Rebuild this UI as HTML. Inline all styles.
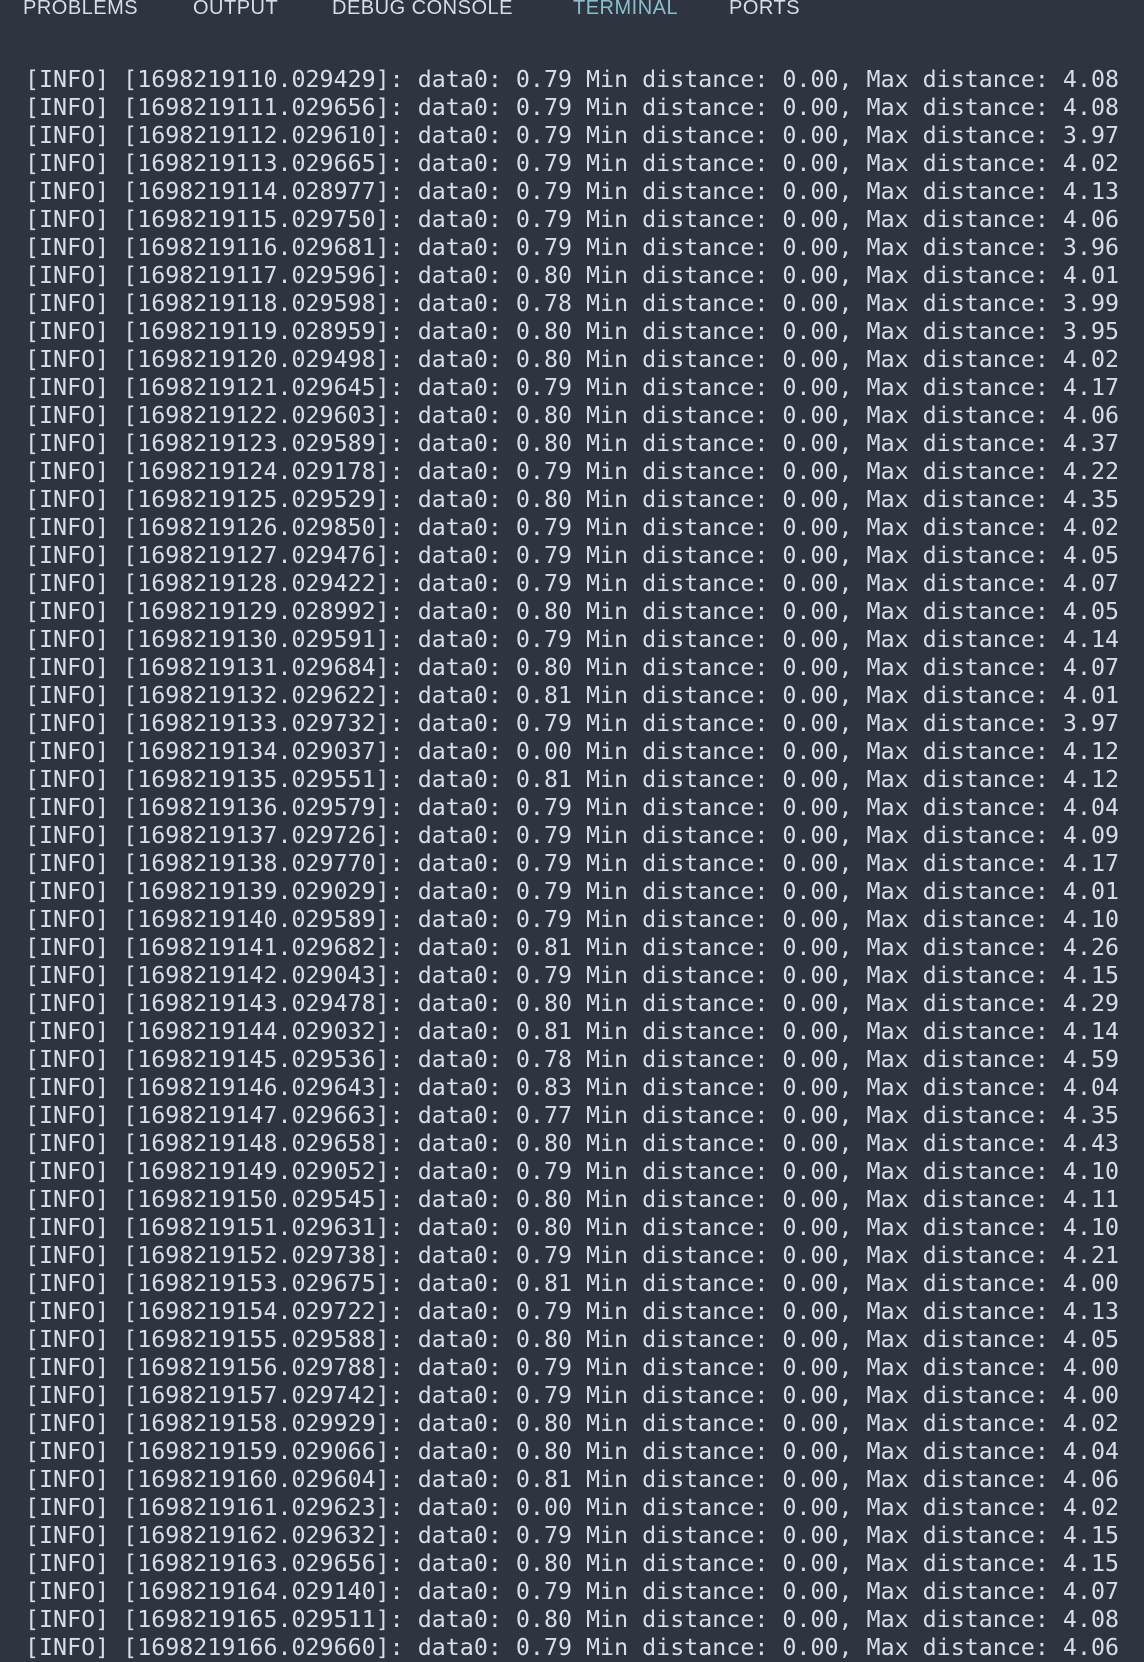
<!DOCTYPE html>
<html><head><meta charset="utf-8"><style>
html,body{margin:0;padding:0;}
body{width:1144px;height:1660px;background:#2e3440;overflow:hidden;position:relative;}
.tab{position:absolute;top:-2px;font-family:"Liberation Sans",sans-serif;font-size:20px;line-height:20px;color:#d8dee9;white-space:nowrap;letter-spacing:0.5px;}
pre{position:absolute;left:25px;top:66px;margin:0;font-family:"DejaVu Sans Mono","Liberation Mono",monospace;font-size:23.3px;line-height:28px;color:#d8dee9;}
</style></head><body>
<div class="tab" style="left:23px">PROBLEMS</div>
<div class="tab" style="left:193px">OUTPUT</div>
<div class="tab" style="left:332px">DEBUG CONSOLE</div>
<div class="tab" style="left:573px;color:#88c0d0">TERMINAL</div>
<div class="tab" style="left:729px">PORTS</div>
<pre>[INFO] [1698219110.029429]: data0: 0.79 Min distance: 0.00, Max distance: 4.08
[INFO] [1698219111.029656]: data0: 0.79 Min distance: 0.00, Max distance: 4.08
[INFO] [1698219112.029610]: data0: 0.79 Min distance: 0.00, Max distance: 3.97
[INFO] [1698219113.029665]: data0: 0.79 Min distance: 0.00, Max distance: 4.02
[INFO] [1698219114.028977]: data0: 0.79 Min distance: 0.00, Max distance: 4.13
[INFO] [1698219115.029750]: data0: 0.79 Min distance: 0.00, Max distance: 4.06
[INFO] [1698219116.029681]: data0: 0.79 Min distance: 0.00, Max distance: 3.96
[INFO] [1698219117.029596]: data0: 0.80 Min distance: 0.00, Max distance: 4.01
[INFO] [1698219118.029598]: data0: 0.78 Min distance: 0.00, Max distance: 3.99
[INFO] [1698219119.028959]: data0: 0.80 Min distance: 0.00, Max distance: 3.95
[INFO] [1698219120.029498]: data0: 0.80 Min distance: 0.00, Max distance: 4.02
[INFO] [1698219121.029645]: data0: 0.79 Min distance: 0.00, Max distance: 4.17
[INFO] [1698219122.029603]: data0: 0.80 Min distance: 0.00, Max distance: 4.06
[INFO] [1698219123.029589]: data0: 0.80 Min distance: 0.00, Max distance: 4.37
[INFO] [1698219124.029178]: data0: 0.79 Min distance: 0.00, Max distance: 4.22
[INFO] [1698219125.029529]: data0: 0.80 Min distance: 0.00, Max distance: 4.35
[INFO] [1698219126.029850]: data0: 0.79 Min distance: 0.00, Max distance: 4.02
[INFO] [1698219127.029476]: data0: 0.79 Min distance: 0.00, Max distance: 4.05
[INFO] [1698219128.029422]: data0: 0.79 Min distance: 0.00, Max distance: 4.07
[INFO] [1698219129.028992]: data0: 0.80 Min distance: 0.00, Max distance: 4.05
[INFO] [1698219130.029591]: data0: 0.79 Min distance: 0.00, Max distance: 4.14
[INFO] [1698219131.029684]: data0: 0.80 Min distance: 0.00, Max distance: 4.07
[INFO] [1698219132.029622]: data0: 0.81 Min distance: 0.00, Max distance: 4.01
[INFO] [1698219133.029732]: data0: 0.79 Min distance: 0.00, Max distance: 3.97
[INFO] [1698219134.029037]: data0: 0.00 Min distance: 0.00, Max distance: 4.12
[INFO] [1698219135.029551]: data0: 0.81 Min distance: 0.00, Max distance: 4.12
[INFO] [1698219136.029579]: data0: 0.79 Min distance: 0.00, Max distance: 4.04
[INFO] [1698219137.029726]: data0: 0.79 Min distance: 0.00, Max distance: 4.09
[INFO] [1698219138.029770]: data0: 0.79 Min distance: 0.00, Max distance: 4.17
[INFO] [1698219139.029029]: data0: 0.79 Min distance: 0.00, Max distance: 4.01
[INFO] [1698219140.029589]: data0: 0.79 Min distance: 0.00, Max distance: 4.10
[INFO] [1698219141.029682]: data0: 0.81 Min distance: 0.00, Max distance: 4.26
[INFO] [1698219142.029043]: data0: 0.79 Min distance: 0.00, Max distance: 4.15
[INFO] [1698219143.029478]: data0: 0.80 Min distance: 0.00, Max distance: 4.29
[INFO] [1698219144.029032]: data0: 0.81 Min distance: 0.00, Max distance: 4.14
[INFO] [1698219145.029536]: data0: 0.78 Min distance: 0.00, Max distance: 4.59
[INFO] [1698219146.029643]: data0: 0.83 Min distance: 0.00, Max distance: 4.04
[INFO] [1698219147.029663]: data0: 0.77 Min distance: 0.00, Max distance: 4.35
[INFO] [1698219148.029658]: data0: 0.80 Min distance: 0.00, Max distance: 4.43
[INFO] [1698219149.029052]: data0: 0.79 Min distance: 0.00, Max distance: 4.10
[INFO] [1698219150.029545]: data0: 0.80 Min distance: 0.00, Max distance: 4.11
[INFO] [1698219151.029631]: data0: 0.80 Min distance: 0.00, Max distance: 4.10
[INFO] [1698219152.029738]: data0: 0.79 Min distance: 0.00, Max distance: 4.21
[INFO] [1698219153.029675]: data0: 0.81 Min distance: 0.00, Max distance: 4.00
[INFO] [1698219154.029722]: data0: 0.79 Min distance: 0.00, Max distance: 4.13
[INFO] [1698219155.029588]: data0: 0.80 Min distance: 0.00, Max distance: 4.05
[INFO] [1698219156.029788]: data0: 0.79 Min distance: 0.00, Max distance: 4.00
[INFO] [1698219157.029742]: data0: 0.79 Min distance: 0.00, Max distance: 4.00
[INFO] [1698219158.029929]: data0: 0.80 Min distance: 0.00, Max distance: 4.02
[INFO] [1698219159.029066]: data0: 0.80 Min distance: 0.00, Max distance: 4.04
[INFO] [1698219160.029604]: data0: 0.81 Min distance: 0.00, Max distance: 4.06
[INFO] [1698219161.029623]: data0: 0.00 Min distance: 0.00, Max distance: 4.02
[INFO] [1698219162.029632]: data0: 0.79 Min distance: 0.00, Max distance: 4.15
[INFO] [1698219163.029656]: data0: 0.80 Min distance: 0.00, Max distance: 4.15
[INFO] [1698219164.029140]: data0: 0.79 Min distance: 0.00, Max distance: 4.07
[INFO] [1698219165.029511]: data0: 0.80 Min distance: 0.00, Max distance: 4.08
[INFO] [1698219166.029660]: data0: 0.79 Min distance: 0.00, Max distance: 4.06</pre>
</body></html>
